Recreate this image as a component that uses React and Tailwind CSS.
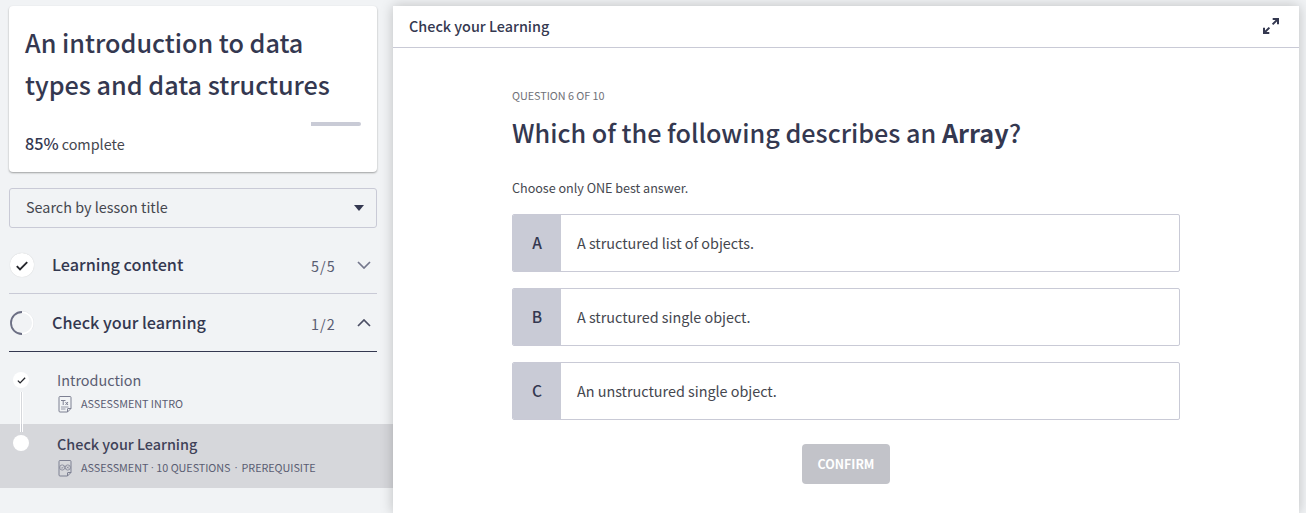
const NAVY = "text-[#343850]";

function Check({ className }) {
  return (
    <svg viewBox="0 0 12 10" className={className} fill="none" stroke="#25262c" strokeWidth="1.9">
      <path d="M0.8 5.2 L4 8.4 L11.2 1.2" />
    </svg>
  );
}

function Chevron({ up, className }) {
  return (
    <svg viewBox="0 0 14 8" className={"h-2 w-3.5 " + className} fill="none" stroke="currentColor" strokeWidth="1.7">
      <path d={up ? "M1 7 L7 1 L13 7" : "M1 1 L7 7 L13 1"} />
    </svg>
  );
}

function PageIcon({ children }) {
  return (
    <svg viewBox="0 0 14 17" className="h-[17px] w-3.5 shrink-0" fill="none" stroke="#7d8092" strokeWidth="1">
      <path d="M9.5 16 H2 Q1 16 1 15 V1.5 Q1 0.5 2 0.5 H12 Q13 0.5 13 1.5 V12.5 L9.5 16 V13 Q9.5 12.5 10 12.5 H13" />
      {children}
    </svg>
  );
}

function Dot({ className }) {
  return <span className={"inline-block text-center font-['Liberation_Sans',sans-serif] " + className}>·</span>;
}

function Section({ icon, title, count, up, className }) {
  return (
    <div className={"mx-[9px] flex h-[58px] w-[368px] items-center border-b " + className}>
      <div className="flex w-[43px] shrink-0 pl-px">{icon}</div>
      <div className="flex-1 text-[16.2px] font-medium">{title}</div>
      <div className="w-[46px] pt-0.5 text-[14.4px] tracking-[1px] text-[#5a5d72]">{count}</div>
      <Chevron up={up} className={"mr-[6px] " + (up ? "text-[#4a4d63]" : "text-[#74778c]")} />
    </div>
  );
}

function Option({ letter, text }) {
  return (
    <div className="flex h-[58px] w-[668px] overflow-hidden rounded-[2px] border border-[#c9cad6]">
      <div className="flex w-12 items-center justify-center bg-[#c9cbd6] text-[15.5px] font-medium">{letter}</div>
      <div className="flex items-center pl-4 text-[14.4px] tracking-[-0.02px] text-[#45474f]">{text}</div>
    </div>
  );
}

export default function App() {
  return (
    <div className={"flex h-[513px] w-[1306px] overflow-hidden bg-[#f1f3f5] font-['Noto_Sans_CJK_SC',sans-serif] whitespace-nowrap " + NAVY}>
      <aside className="flex w-[393px] shrink-0 flex-col">
        <div className="mx-[9px] mt-1.5 h-[166px] w-[368px] rounded bg-white px-4 pt-[15px] shadow-[0_1px_2px_rgba(0,0,0,0.35)]">
          <h1 className="text-[25.2px] leading-[42px] font-medium">
            An introduction to data
            <br />
            types and data structures
          </h1>
          <div className="mt-[17px] flex h-1 w-[336px] justify-end">
            <div className="w-[50px] rounded-r-sm bg-[#c9cbd6]" />
          </div>
          <p className="mt-[5px] flex items-baseline gap-[3px] text-[14.4px] leading-6 text-[#45474f]">
            <span className={"text-[16.2px] font-medium " + NAVY}>85%</span>
            <span>complete</span>
          </p>
        </div>

        <div className="mx-[9px] mt-4 flex h-10 w-[368px] items-center justify-between rounded-[3px] border border-[#c9cad6] pr-3 pl-4">
          <span className="pb-0.5 text-[14.4px] text-[#45474f]">Search by lesson title</span>
          <svg viewBox="0 0 10 6" className="h-1.5 w-2.5" fill="#343850">
            <path d="M0 0 H10 L5 6 Z" />
          </svg>
        </div>

        <Section
          className="mt-2 border-[#c9cad6]"
          title="Learning content"
          count="5/5"
          icon={
            <span className="flex h-6 w-6 items-center justify-center rounded-full bg-white shadow-[0_0_1px_rgba(0,0,0,0.2)]">
              <Check className="mt-0.5 h-2.5 w-3" />
            </span>
          }
        />
        <Section
          className="border-[#343850]"
          title="Check your learning"
          count="1/2"
          up
          icon={
            <svg viewBox="0 0 24 24" className="h-6 w-6" fill="none">
              <circle cx="12" cy="12" r="11.5" stroke="#dfe1e5" strokeWidth="1" />
              <path d="M12 1.2 A10.8 10.8 0 0 1 12 22.8" stroke="#ffffff" strokeWidth="1.5" />
              <path d="M12 23 A11 11 0 0 1 12 1" stroke="#6c6f84" strokeWidth="1.8" />
            </svg>
          }
        />

        <div className="flex h-[72px] shrink-0 pl-[13px]">
          <div className="flex w-11 flex-col items-start pt-5">
            <span className="flex h-4 w-4 items-center justify-center rounded-full bg-white">
              <Check className="h-[7px] w-[9px]" />
            </span>
            <span className="mt-1 ml-[7px] h-8 w-[3px] border-x border-white bg-[#d6d8dc]" />
          </div>
          <div className="pt-4">
            <div className="text-[14.4px] leading-6 text-[#5a5d72]">Introduction</div>
            <div className="mt-1 flex h-[17px] items-center gap-[9px] pl-px text-[10.8px] text-[#5a5d72]">
              <PageIcon>
                <path d="M3 4.5 H7.5 M5.2 4.5 V9 M7.5 6 L10 9 M10 6 L7.5 9" />
                <path d="M3 11 H10.5 M3 13 H7.5" strokeWidth="0.8" />
              </PageIcon>
              <span className="pb-0.5 tracking-[-0.03px]">ASSESSMENT INTRO</span>
            </div>
          </div>
        </div>

        <div className="flex h-16 shrink-0 bg-[#d6d7db] pl-[13px]">
          <div className="flex w-11 flex-col items-start">
            <span className="ml-[7px] h-2 w-[3px] border-x border-white bg-[#c9cbd2]" />
            <span className="mt-[3px] h-4 w-4 rounded-full bg-white" />
          </div>
          <div className="pt-2">
            <div className="text-[14.4px] leading-6 font-medium text-[#3f4258]">Check your Learning</div>
            <div className="mt-1 flex h-[17px] items-center gap-[9px] pl-px text-[10.8px] text-[#5a5d72]">
              <PageIcon>
                <g strokeWidth="0.8">
                  <circle cx="4.2" cy="7.5" r="2.6" />
                  <circle cx="9.8" cy="7.5" r="2.6" />
                  <path d="M3 7.4 L4 8.4 L5.5 6.6 M8.8 6.5 L10.8 8.5 M10.8 6.5 L8.8 8.5" />
                </g>
              </PageIcon>
              <span className="flex pb-0.5 tracking-[-0.04px]">
                ASSESSMENT
                <Dot className="w-2" />
                10 QUESTIONS
                <Dot className="w-[11px]" />
                PREREQUISITE
              </span>
            </div>
          </div>
        </div>
      </aside>

      <main className="mt-1.5 flex h-[507px] w-[906px] flex-col bg-white shadow-[0_0_12px_rgba(0,0,0,0.22)]">
        <header className="flex h-[42px] shrink-0 items-center justify-between border-b border-[#c9cad6] pr-5 pb-px pl-4">
          <h2 className="pb-px text-[14.4px] font-medium">Check your Learning</h2>
          <svg viewBox="0 0 16 16" className="h-4 w-4" fill="none" stroke="#343850" strokeWidth="2">
            <path d="M9.7 1 H15 V6.3 M15 1 L9.6 6.4 M1 9.7 V15 H6.3 M1 15 L6.4 9.6" />
          </svg>
        </header>
        <div className="flex flex-col pl-[119px]">
          <p className="mt-[39px] text-[10.8px] leading-4 tracking-[-0.03px] text-[#6f7178]">QUESTION 6 OF 10</p>
          <h3 className="mt-2 text-[25.2px] leading-[42px] font-medium">
            Which of the following describes an <b className="font-bold">Array</b>?
          </h3>
          <p className="mt-[25px] text-[12.6px] leading-5 tracking-[-0.02px] text-[#45474f]">Choose only ONE best answer.</p>
          <div className="mt-4 flex flex-col gap-4">
            <Option letter="A" text="A structured list of objects." />
            <Option letter="B" text="A structured single object." />
            <Option letter="C" text="An unstructured single object." />
          </div>
          <button className="mt-6 ml-[290px] h-10 w-[88px] rounded bg-[#c2c3c9] text-[12.4px] font-bold text-white">CONFIRM</button>
        </div>
      </main>
    </div>
  );
}
